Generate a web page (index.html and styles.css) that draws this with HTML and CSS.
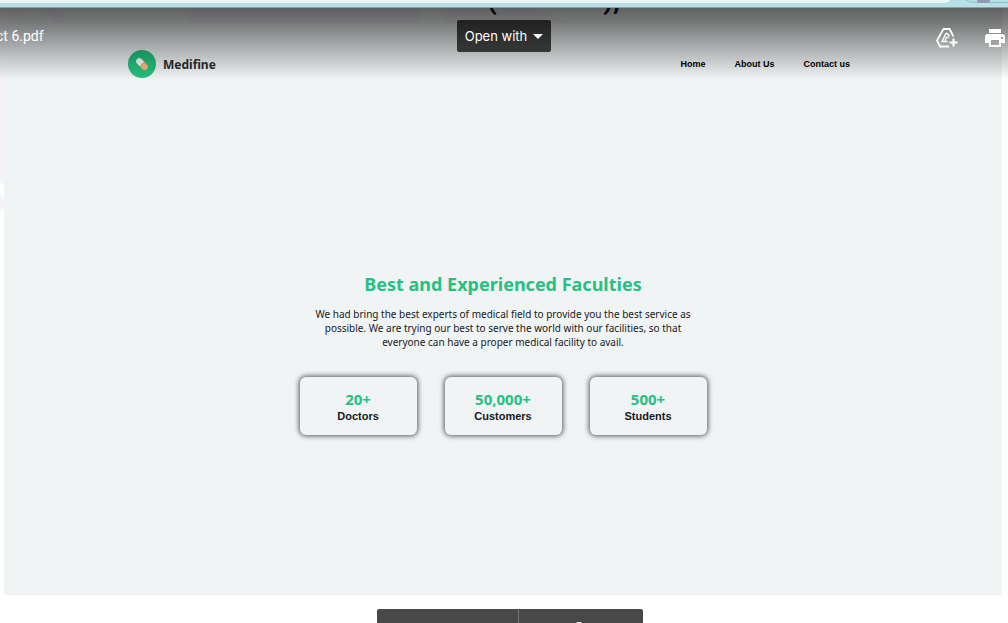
FILE: index.html
```html
<!DOCTYPE html>
<html lang="en">
<head>
<meta charset="utf-8">
<title>PDF viewer</title>
<link rel="stylesheet" href="styles.css">
</head>
<body>
<div class="browser-edge">
  <div class="address-bar"></div>
  <svg class="profile-chip" width="44" height="7" viewBox="0 0 44 7" aria-hidden="true">
    <path d="M2 0Q5 2.5 12 2.5H44" fill="none" stroke="#94bcc3"/>
    <path d="M13 0h13q0 3-3 3h-7q-3 0-3-3z" fill="#9896b2"/>
  </svg>
</div>
<div class="viewer">
  <main class="pages">
    <section class="page previous-page">
      <svg class="page-shapes" width="998" height="15" viewBox="0 0 998 15" aria-hidden="true">
        <path d="M4 15Q4 6 9 0H55Q61 6 62 15H48Q45 3 34 0H24Q8 3 4 15zM178 0H420L415 0 417 15H188zM443 15 434 0H530L565 15z" fill="#edeef2"/>
      </svg>
      <p class="cut-title"><span>(</span><span>),</span></p>
    </section>
    <section class="page faculty-page">
      <header class="site-header">
        <div class="brand">
          <svg width="28" height="28" viewBox="0 0 28 28" aria-hidden="true">
            <circle cx="14" cy="14" r="14" fill="#25c17e"/>
            <g transform="rotate(45 14 14)">
              <path d="M14 10.8v6.4h-3.8a3.2 3.2 0 0 1 0-6.4z" fill="#fff"/>
              <path d="M14 10.8h3.8a3.2 3.2 0 0 1 0 6.4H14z" fill="#ffb87c"/>
            </g>
          </svg>
          <span class="brand-name">Medifine</span>
        </div>
        <nav class="site-nav">
          <a href="#home">Home</a>
          <a href="#about">About Us</a>
          <a href="#contact">Contact us</a>
        </nav>
      </header>
      <div class="intro">
        <h1>Best and Experienced Faculties</h1>
        <p>We had bring the best experts of medical field to provide you the best service as<br>possible. We are trying our best to serve the world with our facilities, so that<br>everyone can have a proper medical facility to avail.</p>
      </div>
      <div class="stats">
        <div class="stat"><strong>20+</strong><span>Doctors</span></div>
        <div class="stat"><strong>50,000+</strong><span>Customers</span></div>
        <div class="stat"><strong>500+</strong><span>Students</span></div>
      </div>
    </section>
  </main>
  <svg class="side-shape" width="4" height="203" viewBox="0 0 4 203" aria-hidden="true">
    <path d="M0 0H4V178L0 174zM0 187 4 190V203L0 201z" fill="#f5f3f8"/>
  </svg>
  <div class="toolbar">
    <span class="file-name">ct 6.pdf</span>
    <button class="open-with" type="button">Open with
      <svg width="10" height="5" viewBox="0 0 10 5" aria-hidden="true"><path d="M0 0h10L5 5z" fill="#fff"/></svg>
    </button>
    <div class="actions">
      <button class="icon-button" type="button" aria-label="Add shortcut to Drive">
        <svg width="22" height="20" viewBox="0 0 22 20" fill="none" stroke="#fff" aria-hidden="true">
          <path d="M17.500 8.500 13.500 1H7.500L1 12.500l3 6h9" stroke-width="1.800"/>
          <path d="M13.500 8.500 11.500 5.500H10L6 13.500h5.500M12.500 9.500h-2l-1.500 3" stroke-width="1.400"/>
          <path d="M17.500 10.500v8M13.500 14.500h8" stroke-width="2"/>
        </svg>
      </button>
      <button class="icon-button" type="button" aria-label="Print">
        <svg width="20" height="18" viewBox="0 0 20 18" aria-hidden="true">
          <path d="M4 0h12v4H4zM3 5h14a3 3 0 0 1 3 3v6h-4v4H4v-4H0V8a3 3 0 0 1 3-3zm3 6v5h8v-5zm10-3v2h2V8z" fill="#fff" fill-rule="evenodd"/>
        </svg>
      </button>
    </div>
  </div>
  <div class="page-controls">
    <div class="page-count"></div>
    <div class="zoom-control">
      <svg width="12" height="12" viewBox="0 0 12 12" aria-hidden="true"><circle cx="6" cy="6" r="5" fill="none" stroke="#fff" stroke-width="2"/></svg>
    </div>
  </div>
</div>
</body>
</html>
```
FILE: styles.css
```css
* { box-sizing: border-box; }

body {
  margin: 0;
  height: 100vh;
  display: flex;
  flex-direction: column;
  overflow: hidden;
  background: #fff;
  font-family: "Noto Sans", "Liberation Sans", sans-serif;
  color: #17191c;
}

h1, p { margin: 0; }

.browser-edge {
  flex: none;
  height: 8px;
  display: flex;
  justify-content: space-between;
  background: #b6e0e5;
  border-bottom: 1px solid #86a3a8;
}

.address-bar {
  flex: 1;
  height: 3px;
  margin-right: 14px;
  background: #eaf7f6;
  border-bottom-right-radius: 8px 3px;
}

.viewer {
  position: relative;
  flex: 1;
  overflow: hidden;
}

.page {
  margin: 0 6px 0 4px;
  background: #f0f4f5;
}

.previous-page {
  position: relative;
  height: 15px;
  overflow: hidden;
}

.page-shapes {
  position: absolute;
  top: 0;
  left: 0;
}

.cut-title {
  position: absolute;
  left: 50%;
  bottom: 9px;
  width: 133px;
  margin-left: -16px;
  display: flex;
  justify-content: space-between;
  font: 700 28px/28px Roboto, sans-serif;
  color: #101426;
}

.faculty-page {
  padding: 27px 124px 160px;
}

.site-header {
  display: flex;
  align-items: center;
  justify-content: space-between;
  padding-right: 28px;
}

.brand {
  display: flex;
  align-items: center;
  gap: 7px;
}

.brand svg { display: block; }

.brand-name {
  font-size: 12px;
  font-weight: 700;
  color: #2b2e31;
}

.site-nav {
  display: flex;
  gap: 29px;
}

.site-nav a {
  font-family: "Liberation Sans", sans-serif;
  font-size: 9px;
  font-weight: 700;
  color: #000;
  text-decoration: none;
}

.intro {
  margin-top: 193px;
  text-align: center;
}

.intro h1 {
  font-size: 18px;
  line-height: 26px;
  font-weight: 700;
  color: #27c083;
}

.intro p {
  margin-top: 10px;
  font-size: 10px;
  line-height: 14px;
}

.stats {
  display: flex;
  justify-content: center;
  gap: 28px;
  margin-top: 28px;
}

.stat {
  width: 117px;
  height: 58px;
  display: flex;
  flex-direction: column;
  align-items: center;
  justify-content: center;
  border-radius: 6px;
  box-shadow: 0 0 5px 1px #555;
  background: #f0f4f5;
  padding-top: 3px;
}

.stat strong {
  font-size: 15px;
  line-height: 17px;
  color: #27c083;
}

.stat span {
  font-family: "Liberation Sans", sans-serif;
  font-size: 11px;
  line-height: 17px;
  font-weight: 700;
}

.side-shape {
  position: absolute;
  top: 0;
  left: 0;
}

.toolbar {
  position: absolute;
  top: 0;
  left: 0;
  right: 0;
  height: 72px;
  padding-top: 12px;
  display: grid;
  grid-template-columns: 1fr auto 1fr;
  align-items: start;
  background: linear-gradient(rgba(0, 0, 0, 0.6), rgba(0, 0, 0, 0.51) 20%, rgba(0, 0, 0, 0));
  color: #fff;
}

.file-name {
  margin-left: -4px;
  font: 14px/32px Roboto, sans-serif;
}

.open-with {
  height: 32px;
  padding: 0 8px;
  display: flex;
  align-items: center;
  gap: 6px;
  border: 0;
  border-radius: 2px;
  background: rgba(0, 0, 0, 0.7);
  color: #fff;
  font: 400 13px/32px Inter, sans-serif;
}

.actions {
  display: flex;
  justify-content: flex-end;
  align-items: center;
  gap: 27px;
  height: 36px;
  padding-right: 3px;
}

.icon-button {
  display: block;
  padding: 0;
  border: 0;
  background: none;
}

.icon-button svg { display: block; }

.page-controls {
  position: absolute;
  left: 50%;
  bottom: 0;
  width: 266px;
  height: 14px;
  margin-left: -127px;
  display: flex;
  border-radius: 2px 2px 0 0;
  background: #484848;
  overflow: hidden;
}

.page-count {
  width: 142px;
  border-right: 1px solid #777;
}

.zoom-control {
  flex: 1;
  padding: 13px 0 0 54px;
}

.zoom-control svg { display: block; }
```
